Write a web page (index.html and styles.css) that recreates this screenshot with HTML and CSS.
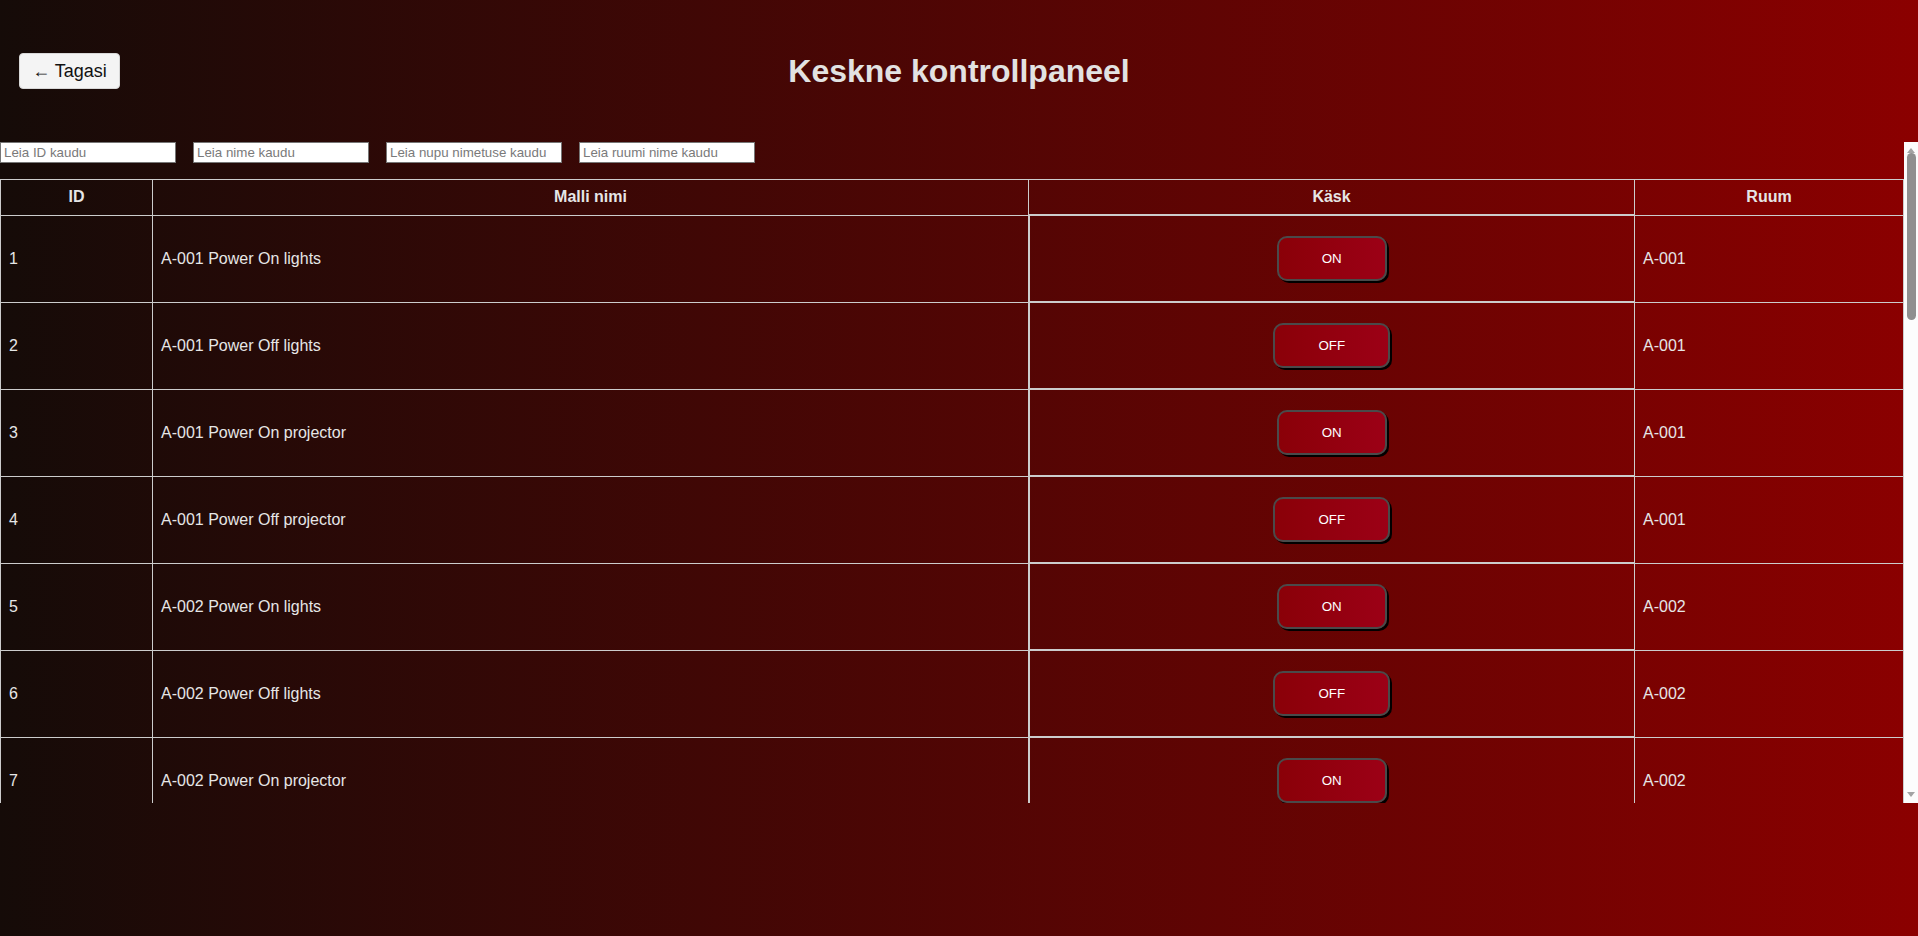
FILE: index.html
```html
<!DOCTYPE html>
<html lang="et">
<head>
<meta charset="utf-8">
<title>Keskne kontrollpaneel</title>
<link rel="stylesheet" href="styles.css">
</head>
<body>
<header class="top">
  <div class="top-left"><button class="back">← Tagasi</button></div>
  <h1 class="title">Keskne kontrollpaneel</h1>
  <div></div>
</header>
<div class="panel">
<main class="scroller">
  <div class="filters">
    <input class="filter" type="text" placeholder="Leia ID kaudu">
    <input class="filter" type="text" placeholder="Leia nime kaudu">
    <input class="filter" type="text" placeholder="Leia nupu nimetuse kaudu">
    <input class="filter" type="text" placeholder="Leia ruumi nime kaudu">
  </div>
  <table class="grid">
    <thead>
      <tr><th class="c-id">ID</th><th class="c-name">Malli nimi</th><th class="c-cmd">Käsk</th><th class="c-room">Ruum</th></tr>
    </thead>
    <tbody>
      <tr><td>1</td><td>A-001 Power On lights</td><td class="cmd"><button class="btn">ON</button></td><td>A-001</td></tr>
      <tr><td>2</td><td>A-001 Power Off lights</td><td class="cmd"><button class="btn">OFF</button></td><td>A-001</td></tr>
      <tr><td>3</td><td>A-001 Power On projector</td><td class="cmd"><button class="btn">ON</button></td><td>A-001</td></tr>
      <tr><td>4</td><td>A-001 Power Off projector</td><td class="cmd"><button class="btn">OFF</button></td><td>A-001</td></tr>
      <tr><td>5</td><td>A-002 Power On lights</td><td class="cmd"><button class="btn">ON</button></td><td>A-002</td></tr>
      <tr><td>6</td><td>A-002 Power Off lights</td><td class="cmd"><button class="btn">OFF</button></td><td>A-002</td></tr>
      <tr><td>7</td><td>A-002 Power On projector</td><td class="cmd"><button class="btn">ON</button></td><td>A-002</td></tr>
      <tr><td>8</td><td>A-002 Power Off projector</td><td class="cmd"><button class="btn">OFF</button></td><td>A-002</td></tr>
      <tr><td>9</td><td>A-003 Power On lights</td><td class="cmd"><button class="btn">ON</button></td><td>A-003</td></tr>
      <tr><td>10</td><td>A-003 Power Off lights</td><td class="cmd"><button class="btn">OFF</button></td><td>A-003</td></tr>
      <tr><td>11</td><td>A-003 Power On projector</td><td class="cmd"><button class="btn">ON</button></td><td>A-003</td></tr>
      <tr><td>12</td><td>A-003 Power Off projector</td><td class="cmd"><button class="btn">OFF</button></td><td>A-003</td></tr>
      <tr><td>13</td><td>A-004 Power On lights</td><td class="cmd"><button class="btn">ON</button></td><td>A-004</td></tr>
      <tr><td>14</td><td>A-004 Power Off lights</td><td class="cmd"><button class="btn">OFF</button></td><td>A-004</td></tr>
      <tr><td>15</td><td>A-004 Power On projector</td><td class="cmd"><button class="btn">ON</button></td><td>A-004</td></tr>
      <tr><td>16</td><td>A-004 Power Off projector</td><td class="cmd"><button class="btn">OFF</button></td><td>A-004</td></tr>
      <tr><td>17</td><td>A-005 Power On lights</td><td class="cmd"><button class="btn">ON</button></td><td>A-005</td></tr>
      <tr><td>18</td><td>A-005 Power Off lights</td><td class="cmd"><button class="btn">OFF</button></td><td>A-005</td></tr>
      <tr><td>19</td><td>A-005 Power On projector</td><td class="cmd"><button class="btn">ON</button></td><td>A-005</td></tr>
      <tr><td>20</td><td>A-005 Power Off projector</td><td class="cmd"><button class="btn">OFF</button></td><td>A-005</td></tr>
      <tr><td>21</td><td>A-006 Power On lights</td><td class="cmd"><button class="btn">ON</button></td><td>A-006</td></tr>
      <tr><td>22</td><td>A-006 Power Off lights</td><td class="cmd"><button class="btn">OFF</button></td><td>A-006</td></tr>
      <tr><td>23</td><td>A-006 Power On projector</td><td class="cmd"><button class="btn">ON</button></td><td>A-006</td></tr>
      <tr><td>24</td><td>A-006 Power Off projector</td><td class="cmd"><button class="btn">OFF</button></td><td>A-006</td></tr>
      <tr><td>25</td><td>A-007 Power On lights</td><td class="cmd"><button class="btn">ON</button></td><td>A-007</td></tr>
      <tr><td>26</td><td>A-007 Power Off lights</td><td class="cmd"><button class="btn">OFF</button></td><td>A-007</td></tr>
      <tr><td>27</td><td>A-007 Power On projector</td><td class="cmd"><button class="btn">ON</button></td><td>A-007</td></tr>
      <tr><td>28</td><td>A-007 Power Off projector</td><td class="cmd"><button class="btn">OFF</button></td><td>A-007</td></tr>
    </tbody>
  </table>
</main>
<div class="vbar" aria-hidden="true">
  <div class="vbar-arrow vbar-up">
    <svg width="8" height="5" viewBox="0 0 8 5"><polygon points="4,0 8,5 0,5" fill="#a3a3a3"/></svg>
  </div>
  <div class="vbar-track"><div class="vbar-thumb"></div></div>
  <div class="vbar-arrow vbar-down">
    <svg width="8" height="5" viewBox="0 0 8 5"><polygon points="0,0 8,0 4,5" fill="#a3a3a3"/></svg>
  </div>
</div>
</div>
</body>
</html>
```

FILE: styles.css
```css
html {
  height: 100%;
  background: linear-gradient(to right, #150b08 0%, #8b0000 100%);
}

body {
  margin: 0;
  min-height: 100%;
  font-family: "Liberation Sans", Arial, sans-serif;
  color: #e4e4e4;
}

.top {
  display: grid;
  grid-template-columns: 1fr auto 1fr;
  align-items: center;
  padding: 52px 19px 0;
  height: 38px;
  margin-bottom: 52px;
}

.top-left {
  display: flex;
  align-items: center;
}

.back {
  font-family: "Liberation Sans", Arial, sans-serif;
  font-size: 18px;
  width: 101px;
  height: 36px;
  padding: 0;
  background: #f4f4f4;
  color: #111;
  border: 1px solid #d8d8d8;
  border-radius: 4px;
  cursor: pointer;
}

.title {
  margin: 0;
  font-size: 32px;
  font-weight: bold;
  color: #e2e2e2;
  line-height: 37px;
}

.panel {
  display: flex;
  height: 661px;
}

.scroller {
  flex: 1;
  min-width: 0;
  overflow-y: auto;
}

.vbar {
  width: 14px;
  flex: none;
  display: flex;
  flex-direction: column;
  background: #fcfcfc;
}

.vbar-arrow {
  height: 11px;
  display: flex;
  justify-content: center;
}

.vbar-up {
  align-items: flex-end;
}

.vbar-down {
  align-items: flex-start;
}

.vbar-arrow svg {
  display: block;
}

.vbar-track {
  flex: 1;
  padding: 0 2px 0 3px;
}

.vbar-thumb {
  height: 167px;
  background: #8f8f8f;
  border-radius: 5px;
}

.filters {
  display: flex;
  gap: 17px;
  margin-bottom: 16px;
}

.filter {
  box-sizing: border-box;
  width: 176px;
  height: 21px;
  margin: 0;
  padding: 1px 3px;
  font-family: "Liberation Sans", Arial, sans-serif;
  font-size: 13.33px;
  border: 1px solid #767676;
  background: #fff;
  color: #111;
}

.filter::placeholder {
  color: #7a7a7a;
}

.grid {
  width: 100%;
  border-collapse: collapse;
  font-size: 16px;
  color: #e6e6e6;
}

.grid th,
.grid td {
  border: 1px solid #cccccc;
  padding: 8px;
}

.grid th {
  height: 18px;
  font-weight: bold;
  text-align: center;
}

.grid td {
  text-align: left;
  height: 69px;
}

.c-id { width: 135px; }
.c-name { width: 859px; }
.c-cmd { width: 589px; }

.grid td.cmd {
  text-align: center;
  border-top-width: 2px;
  border-bottom-width: 2px;
  border-left-width: 2px;
}

.btn {
  font-family: "Liberation Sans", Arial, sans-serif;
  font-size: 13.33px;
  color: #ffffff;
  height: 45px;
  padding: 0 43px;
  background: linear-gradient(to right, #8a0008, #9c0016);
  border: 2px solid #4a4a4a;
  border-radius: 10px;
  box-shadow: 2px 2px 0 #000000;
  cursor: pointer;
}
```
